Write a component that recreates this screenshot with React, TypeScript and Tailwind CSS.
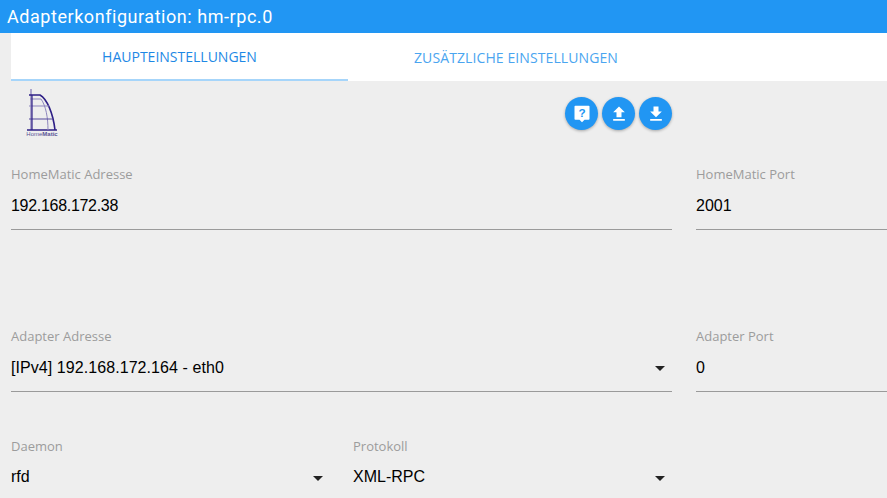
import React from "react";

const BODY = "font-['Liberation_Sans',Arial,sans-serif]";

const Field: React.FC<{
  label: string;
  value: string;
  select?: boolean;
  className?: string;
  valueClassName?: string;
}> = ({ label, value, select, className, valueClassName }) => (
  <div className={`flex shrink-0 flex-col ${className ?? ""}`}>
    <label className="font-['Open_Sans',sans-serif] text-[13px] leading-[14px] text-[#9c9c9c]">{label}</label>
    <div className="mt-[9px] flex h-[40px] items-start justify-between border-b border-[#9a9a9a] pt-[6px]">
      <span className={`text-[16px] leading-[20px] text-black ${BODY} ${valueClassName ?? ""}`}>{value}</span>
      {select && (
        <span className="mr-[7px] mt-[8px] h-0 w-0 border-x-[5px] border-t-[5px] border-x-transparent border-t-[#222]" />
      )}
    </div>
  </div>
);

const RoundButton: React.FC<{ children: React.ReactNode }> = ({ children }) => (
  <button className="flex h-[33px] w-[33px] items-center justify-center rounded-full bg-[#2196f3] shadow-[0_1px_3px_rgba(0,0,0,0.3)]">
    {children}
  </button>
);

const HomeMaticLogo = () => (
  <div className="flex w-[36px] flex-col items-center">
    <svg width="34" height="42" viewBox="0 0 34 42" fill="none">
      <path d="M6 0V41" stroke="#6a5fa8" strokeWidth="1" />
      <path d="M2 41H32" stroke="#2e1f86" strokeWidth="1.5" />
      <path d="M4 6H15C22 10 28 24 30 41" stroke="#2e1f86" strokeWidth="1.6" />
      <path d="M5 10H16C21 17 23 29 23 41" stroke="#8d85bd" strokeWidth="1" />
      <path d="M4 17H24" stroke="#8d85bd" strokeWidth="1" />
      <path d="M4 30H28" stroke="#54489c" strokeWidth="1" />
      <path d="M7 6V41" stroke="#2e1f86" strokeWidth="1.2" />
    </svg>
    <span className={`text-[6px] leading-[7px] whitespace-nowrap text-[#5b5596] ${BODY}`}>
      Home<b>Matic</b>
    </span>
  </div>
);

export default function App() {
  return (
    <div className="h-[498px] w-[887px] overflow-hidden bg-[#eeeeee]">
      {/* Titelleiste */}
      <div className="flex h-[33px] items-center bg-[#2196f3] pl-[7px] font-['Roboto',sans-serif] text-[18px] tracking-[0.55px] text-white">
        Adapterkonfiguration: hm-rpc.0
      </div>

      {/* Tabs */}
      <div className="ml-[11px] flex h-[48px] bg-white font-['Open_Sans',sans-serif] text-[14px]">
        <div className="flex w-[337px] items-center justify-center border-b-2 border-[#a6d5fa] text-[#1e88e5]">
          HAUPTEINSTELLUNGEN
        </div>
        <div className="flex w-[337px] items-center justify-center pr-[1px] tracking-[0.1px] text-[#4aa5f0]">
          ZUSÄTZLICHE EINSTELLUNGEN
        </div>
      </div>

      <div className="pl-[11px]">
        {/* Logo und Aktionen */}
        <div className="flex h-[86px] w-[661px] items-start justify-between pt-[8px]">
          <div className="ml-[13px]">
            <HomeMaticLogo />
          </div>
          <div className="mt-[8px] flex gap-[4px]">
            <RoundButton>
              <svg width="20" height="20" viewBox="0 0 24 24" fill="white">
                <path d="M4 2h16a1 1 0 0 1 1 1v15a1 1 0 0 1-1 1h-5l-3 3-3-3H4a1 1 0 0 1-1-1V3a1 1 0 0 1 1-1z" />
                <text x="12" y="16" textAnchor="middle" fontSize="14" fontWeight="700" fill="#2196f3" fontFamily="Liberation Sans">
                  ?
                </text>
              </svg>
            </RoundButton>
            <RoundButton>
              <svg width="20" height="20" viewBox="0 0 24 24" fill="white">
                <path d="M9 16h6v-6h4l-7-7-7 7h4zM5 18h14v2H5z" />
              </svg>
            </RoundButton>
            <RoundButton>
              <svg width="20" height="20" viewBox="0 0 24 24" fill="white">
                <path d="M19 9h-4V3H9v6H5l7 7 7-7zM5 18v2h14v-2z" />
              </svg>
            </RoundButton>
          </div>
        </div>

        <div className="flex gap-[24px]">
          <Field className="w-[661px]" label="HomeMatic Adresse" value="192.168.172.38" valueClassName="tracking-[-0.3px]" />
          <Field className="w-[220px]" label="HomeMatic Port" value="2001" />
        </div>

        <div className="mt-[99px] flex gap-[24px]">
          <Field className="w-[661px]" label="Adapter Adresse" value="[IPv4] 192.168.172.164 - eth0" valueClassName="tracking-[0.07px]" select />
          <Field className="w-[220px]" label="Adapter Port" value="0" />
        </div>

        <div className="mt-[47px] flex w-[661px] gap-[23px]">
          <Field className="w-[319px]" label="Daemon" value="rfd" valueClassName="-mt-px" select />
          <Field className="w-[319px]" label="Protokoll" value="XML-RPC" valueClassName="-mt-px" select />
        </div>
      </div>
    </div>
  );
}
